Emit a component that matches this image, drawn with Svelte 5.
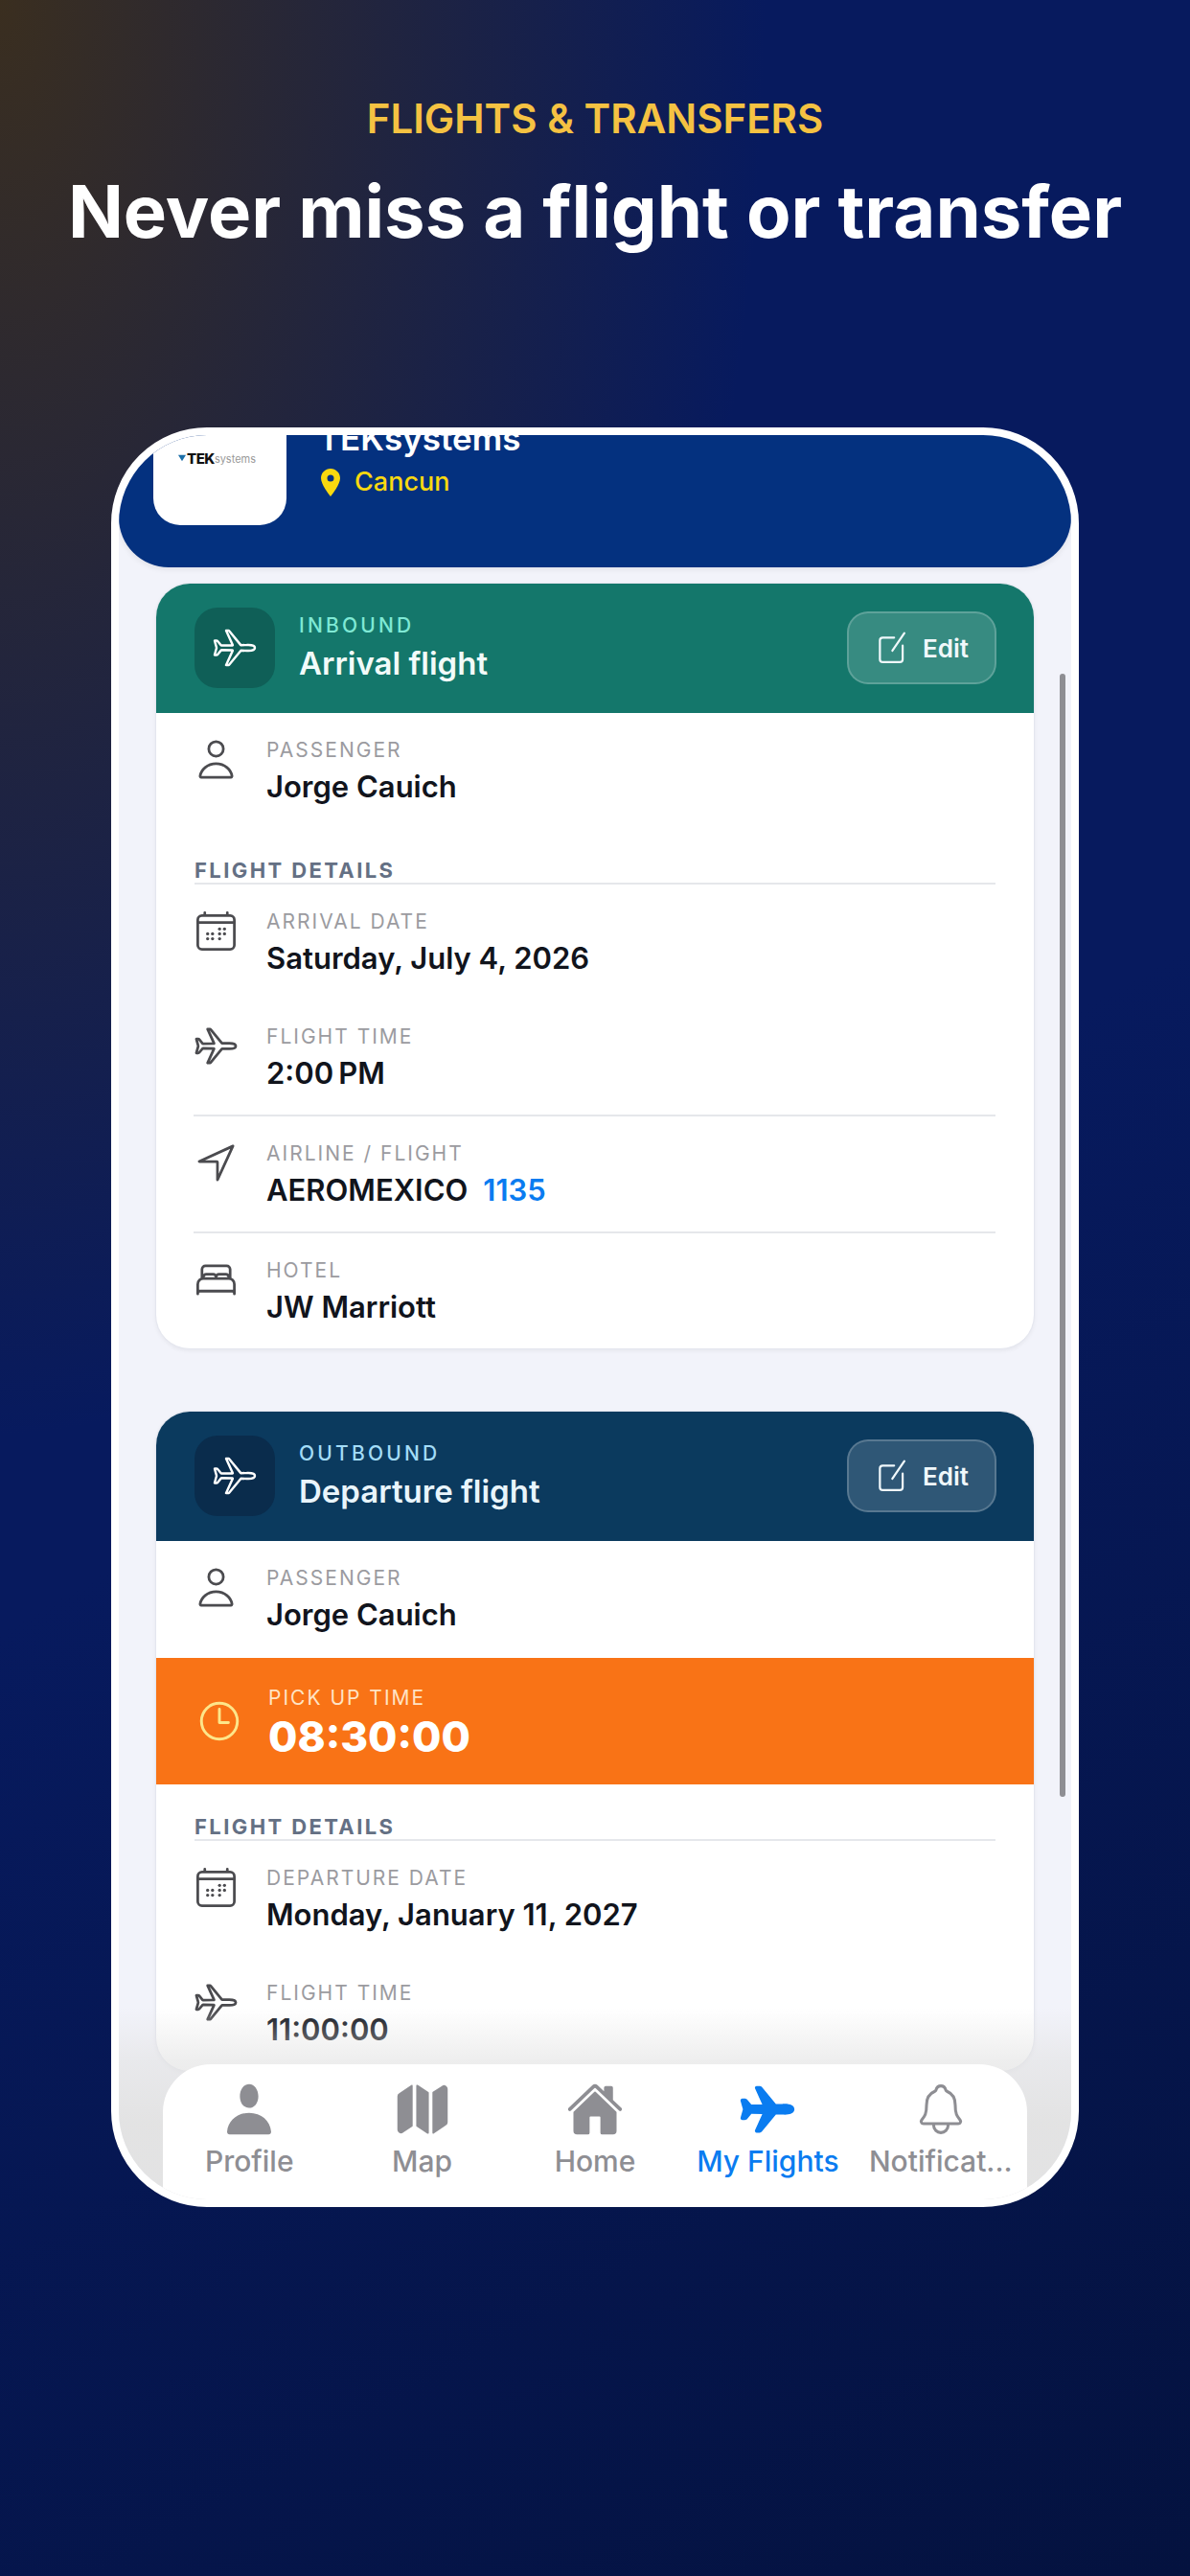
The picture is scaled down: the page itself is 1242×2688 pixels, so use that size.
<script>
    const paths = {
        plane: 'M407.72 224c-3.4 0-14.79.1-18 .3l-64.9 1.7a1.83 1.83 0 01-1.69-.9L193.55 67.56a9 9 0 00-6.66-3.56H160l73 161a2.35 2.35 0 01-2.26 3.35l-121.69 1.8a8.06 8.06 0 01-6.6-3.1l-37-45c-3-3.9-8.62-6-13.51-6H33.08c-1.29 0-1.1 1.21-.75 2.43l19.84 71.42a16.3 16.3 0 010 11.9L32.31 333c-.59 1.95-.52 3 1.77 3H52c8.14 0 9.25-1.06 13.41-6.3l37.7-45.7a8.19 8.19 0 016.6-3.1l120.68 2.7a2.7 2.7 0 012.43 3.74L160 448h26.64a9 9 0 006.65-3.55L323.14 287c.39-.6 2-.9 2.7-.9l63.9 1.7c3.3.2 14.59.3 18 .3C452 288.1 480 275.6 480 256s-27.91-32-72.28-32z',
        calendar: 'M96 80h320a48 48 0 0148 48v288a48 48 0 01-48 48H96a48 48 0 01-48-48V128a48 48 0 0148-48zM128 48v32M384 48v32M464 160H48',
        navigate: 'M448 64L64 240.14h200a8 8 0 018 8V448z',
        bed: 'M384 240H96V136a40.12 40.12 0 0140-40h240a40.12 40.12 0 0140 40v104zM48 416V304a64.19 64.19 0 0164-64h288a64.19 64.19 0 0164 64v112M48 416v-8a24.07 24.07 0 0124-24h368a24.07 24.07 0 0124 24v8M112 240v-16a32.09 32.09 0 0132-32h80a32.09 32.09 0 0132 32v16M256 240v-16a32.09 32.09 0 0132-32h80a32.09 32.09 0 0132 32v16',
        edit: 'M272 112H112a40 40 0 00-40 40v264a40 40 0 0040 40h240a40 40 0 0040-40V224M248 296L416 48',
        clock: 'M256 64C150 64 64 150 64 256s86 192 192 192 192-86 192-192S362 64 256 64zM256 128v144h96',
        bell: 'M427.68 351.43C402 320 383.87 304 383.87 217.35 383.87 138 343.35 109.73 310 96c-4.43-1.82-8.6-6-9.95-10.55C294.2 65.54 277.8 48 256 48s-38.21 17.55-44 37.47c-1.35 4.6-5.52 8.71-9.95 10.53-33.39 13.75-73.87 41.92-73.87 121.35C128.13 304 110 320 84.32 351.43 73.68 364.45 83 384 101.61 384h308.88c18.51 0 27.77-19.61 17.19-32.57zM320 384v16a64 64 0 01-128 0v-16'
    };
    const calendarDots = [[296, 232], [352, 232], [160, 288], [216, 288], [296, 288], [352, 288], [160, 344], [216, 344], [296, 344]];

    const solid = {
        profile: ['M256 32c-48 0-82 50-82 108s34 104 82 104 82-46 82-104-34-108-82-108zM256 288c-110 0-188 72-196 166-1 14 8 26 22 26h348c14 0 23-12 22-26-8-94-86-166-196-166z'],
        map: ['M48.17 113.34A32 32 0 0032 141.24V438a32 32 0 0047 28.37c.43-.23.85-.47 1.26-.74l84.14-55.05a8 8 0 003.63-6.72V46.45a8 8 0 00-12.51-6.63zM212.36 39.31A8 8 0 00200 46v357.56a8 8 0 003.63 6.72l96 62.42A8 8 0 00312 466V108.67a8 8 0 00-3.64-6.73zM464.53 46.47a31.64 31.64 0 00-31.5-.88 12.07 12.07 0 00-1.25.74l-84.15 55a8 8 0 00-3.63 6.72v357.46a8 8 0 0012.52 6.63l107.07-73.46a32 32 0 0016.41-28v-296a32.76 32.76 0 00-15.47-28.21z'],
        home: ['M261.56 101.28a8 8 0 00-11.06 0L66.4 277.15a8 8 0 00-2.47 5.79L63.9 448a32 32 0 0032 32H192a16 16 0 0016-16V328a8 8 0 018-8h80a8 8 0 018 8v136a16 16 0 0016 16h96.06a32 32 0 0032-32V282.94a8 8 0 00-2.47-5.79z', 'M490.91 244.15l-74.8-71.56V64a16 16 0 00-16-16h-48a16 16 0 00-16 16v32l-57.92-55.38C272.77 35.14 264.71 32 256 32c-8.68 0-16.72 3.14-22.14 8.63l-212.7 203.5c-6.22 6-7 15.87-1.34 22.37A16 16 0 0043 267.56L250.5 69.28a8 8 0 0111.06 0l207.52 198.28a16 16 0 0022.59-.44c6.14-6.36 5.63-16.86-.76-22.97z'],
        flights: ['M186.62 464H160a16 16 0 01-14.57-22.6l64.46-142.25L113.1 297l-35.3 42.77C71.07 348.23 65.7 352 52 352H34.08a17.66 17.66 0 01-14.7-7.06c-2.38-3.21-4.72-8.65-2.44-16.41l19.82-71c.15-.53.33-1.06.53-1.58a.38.38 0 000-.15 14.82 14.82 0 01-.53-1.59l-19.84-71.45c-2.15-7.61.2-12.93 2.56-16.06a16.83 16.83 0 0113.6-6.7H52c10.23 0 20.16 4.59 26 12l34.57 42.05 97.32-1.44-64.44-142A16 16 0 01160 48h26.91a25 25 0 0119.35 9.8l125.05 152 57.77-1.52c4.23-.23 15.95-.31 18.66-.31C463 208 496 225.94 496 256c0 9.46-3.78 27-29.07 38.16-14.93 6.6-34.85 9.94-59.21 9.94-2.68 0-14.37-.08-18.66-.31l-57.76-1.54-125.36 152a25 25 0 01-19.32 9.75z']
    };

    const tabs = [
        { label: 'Profile', icon: 'profile' },
        { label: 'Map', icon: 'map' },
        { label: 'Home', icon: 'home' },
        { label: 'My Flights', icon: 'flights', active: true },
        { label: 'Notificat...', icon: 'bell' }
    ];
</script>

{#snippet icon(name, cls = 'ico')}
    <svg class={cls} viewBox="0 0 512 512" fill="none" stroke="currentColor" stroke-linecap="round" stroke-linejoin="round">
        {#if name === 'person'}
            <circle cx="256" cy="136" r="83" />
            <path d="M256 303c-100 0-170 70-181 140-1 8 4 15 12 15h338c8 0 13-7 12-15-11-70-81-140-181-140z" />
        {:else}
            <path d={paths[name]} />
        {/if}
        {#if name === 'calendar'}
            {#each calendarDots as [x, y]}
                <circle cx={x} cy={y} r="18" fill="currentColor" stroke="none" />
            {/each}
        {/if}
    </svg>
{/snippet}

{#snippet field(name, label, value, num = '', line = false)}
    <div class="field" class:line>
        {@render icon(name)}
        <div>
            <div class="label">{label}</div>
            <div class="value">{value}{#if num}<span class="num">{num}</span>{/if}</div>
        </div>
    </div>
{/snippet}

{#snippet cardHead(kind, tag, title)}
    <div class="head {kind}">
        <div class="tile">{@render icon('plane', 'tile-ico')}</div>
        <div class="head-text">
            <div class="tag">{tag}</div>
            <div class="title">{title}</div>
        </div>
        <div class="edit">{@render icon('edit', 'edit-ico')}<span>Edit</span></div>
    </div>
{/snippet}

<div class="page">
    <div class="eyebrow">FLIGHTS &amp; TRANSFERS</div>
    <h1>Never miss a flight or transfer</h1>

    <div class="phone">
        <header class="top">
            <div class="logo">
                <svg class="logo-mark" viewBox="0 0 10 10"><path d="M0 1h10L5 9z" /></svg>
                <span class="tek">TEK</span><span class="sys">systems</span>
            </div>
            <div class="company">
                <div class="name">TEKsystems</div>
                <div class="city">
                    <svg class="pin" viewBox="0 0 20 29"><path fill-rule="evenodd" d="M10 0C4.500 0 0 4.400 0 10c0 7 10 19 10 19s10-12 10-19C20 4.400 15.500 0 10 0zm0 6.500a3.500 3.500 0 110 7 3.500 3.500 0 010-7z" /></svg>
                    Cancun
                </div>
            </div>
        </header>

        <div class="content">
            <section class="card">
                {@render cardHead('inbound', 'INBOUND', 'Arrival flight')}
                {@render field('person', 'PASSENGER', 'Jorge Cauich')}
                <div class="section">FLIGHT DETAILS</div>
                {@render field('calendar', 'ARRIVAL DATE', 'Saturday, July 4, 2026')}
                {@render field('plane', 'FLIGHT TIME', '2:00\u202fPM', '', true)}
                {@render field('navigate', 'AIRLINE / FLIGHT', 'AEROMEXICO', '1135', true)}
                {@render field('bed', 'HOTEL', 'JW Marriott')}
            </section>

            <section class="card">
                {@render cardHead('outbound', 'OUTBOUND', 'Departure flight')}
                {@render field('person', 'PASSENGER', 'Jorge Cauich')}
                <div class="pickup">
                    {@render icon('clock', 'clock')}
                    <div>
                        <div class="pick-label">PICK UP TIME</div>
                        <div class="pick-value">08:30:00</div>
                    </div>
                </div>
                <div class="section">FLIGHT DETAILS</div>
                {@render field('calendar', 'DEPARTURE DATE', 'Monday, January 11, 2027')}
                {@render field('plane', 'FLIGHT TIME', '11:00:00')}
            </section>
        </div>

        <div class="scrollbar"></div>
        <div class="fade"></div>

        <nav class="tabs">
            {#each tabs as tab}
                <div class="tab" class:active={tab.active}>
                    {#if tab.icon === 'bell'}
                        <svg class="tab-ico" viewBox="0 0 512 512" fill="none" stroke="currentColor" stroke-width="26" stroke-linecap="round" stroke-linejoin="round"><path d={paths.bell} /></svg>
                    {:else}
                        <svg class="tab-ico" viewBox="0 0 512 512" fill="currentColor">
                            {#each solid[tab.icon] as d}<path {d} />{/each}
                        </svg>
                    {/if}
                    <span>{tab.label}</span>
                </div>
            {/each}
        </nav>
    </div>
</div>

<style>
    :global(body) { margin: 0; font-family: Inter, "Liberation Sans", sans-serif; }

    .page {
        width: 1242px; height: 2688px; overflow: hidden; box-sizing: border-box; padding-top: 100px;
        background:
            radial-gradient(ellipse 800px 1500px at 0 0, rgba(80, 55, 5, 0.7), rgba(80, 55, 5, 0) 100%),
            linear-gradient(150deg, #071a5e 0%, #071a5e 50%, #04123f 100%);
    }

    .eyebrow { text-align: center; color: #f5c242; font-size: 42px; font-weight: 600; line-height: 48px; }
    h1 { margin: 26px 0 0; text-align: center; color: #fff; font-size: 76px; font-weight: 700; line-height: 92px; white-space: nowrap; }

    .phone {
        position: relative; box-sizing: border-box; width: 1010px; height: 1857px; margin: 180px 0 0 116px;
        border: 8px solid #fff; border-radius: 100px; overflow: hidden; background: #f2f3fa;
    }

    .top {
        height: 138px; box-sizing: border-box; display: flex; align-items: flex-end; gap: 33px; padding: 0 0 44px 36px;
        background: #04317f; border-radius: 0 0 52px 52px; overflow: hidden; box-shadow: 0 2px 6px rgba(0, 0, 0, 0.08);
    }
    .logo {
        flex: none; width: 139px; height: 130px; box-sizing: border-box; display: flex; align-items: flex-end; padding: 0 0 60px 26px;
        background: #fff; border-radius: 0 0 28px 28px; color: #111; white-space: nowrap;
    }
    .logo-mark { width: 8px; height: 8px; margin: 0 1px 6px 0; fill: #1c6fa8; }
    .tek { font-size: 15px; font-weight: 800; letter-spacing: -0.5px; line-height: 18px; }
    .sys { font-size: 11px; color: #999; line-height: 17px; }
    .company { margin-bottom: 28px; }
    .name { color: #fff; font-size: 35px; font-weight: 600; line-height: 40px; }
    .city { display: flex; align-items: center; gap: 15px; margin: 9px 0 0 3px; color: #f9d90f; font-size: 27px; font-weight: 500; line-height: 34px; }
    .pin { width: 20px; height: 29px; fill: #f9d90f; }

    .content { display: flex; flex-direction: column; gap: 64px; padding: 16px 38px 0; }
    .card { flex: none; box-sizing: border-box; background: #fff; border: 1px solid #e4e6ef; border-radius: 36px; overflow: hidden; box-shadow: 0 2px 4px rgba(0, 0, 0, 0.05); }

    .head { height: 136px; box-sizing: border-box; margin: -1px -1px 0; display: flex; align-items: center; padding: 0 40px 0 41px; }
    .inbound { background: #14776b; --tile: #0f5f57; --tag: #7fe9d5; --title: #f2fbf9; }
    .outbound { background: #0b3a5e; --tile: #0a2c4c; --tag: #a3dcf7; --title: #e9f5fc; }
    .tile { width: 84px; height: 84px; border-radius: 24px; background: var(--tile); display: flex; align-items: center; justify-content: center; }
    .tile-ico { width: 48px; height: 48px; color: #fff; stroke-width: 26; }
    .head-text { flex: 1; margin-left: 25px; }
    .tag { color: var(--tag); font-size: 21px; font-weight: 500; letter-spacing: 3.2px; line-height: 28px; }
    .title { color: var(--title); font-size: 33px; font-weight: 600; line-height: 42px; margin-top: 4px; }
    .edit {
        width: 156px; height: 76px; box-sizing: border-box; display: flex; align-items: center; justify-content: center; gap: 12px;
        background: rgba(255, 255, 255, 0.15); border: 2px solid rgba(255, 255, 255, 0.2); border-radius: 22px;
        color: #f0f8fb; font-size: 26px; font-weight: 600;
    }
    .edit-ico { width: 38px; height: 38px; stroke-width: 30; }

    .field { display: flex; gap: 29px; margin: 0 40px 0 39px; padding: 25px 0 24px; }
    .field.line { border-bottom: 2px solid #e5e7eb; }
    .ico { flex: none; width: 47px; height: 47px; color: #4b4b4f; stroke-width: 30; }
    .label { color: #9b9ba0; font-size: 21px; letter-spacing: 2px; line-height: 28px; }
    .value { margin-top: 5px; color: #11141c; font-size: 31px; font-weight: 600; line-height: 38px; }
    .num { margin-left: 16px; color: #0a7cf0; }

    .section { margin: 32px 40px 0; padding-bottom: 1px; border-bottom: 2px solid #e5e7eb; color: #647084; font-size: 22px; font-weight: 700; letter-spacing: 2.4px; line-height: 24px; }

    .pickup { display: flex; align-items: center; gap: 26px; height: 132px; box-sizing: border-box; margin-top: 2px; padding-left: 41px; background: #f97316; }
    .clock { flex: none; width: 50px; height: 50px; color: #fde68a; stroke-width: 30; }
    .pick-label { color: #ffe3c4; font-size: 21px; letter-spacing: 2px; line-height: 28px; }
    .pick-value { margin-top: 3px; color: #fff; font-size: 44px; font-weight: 800; line-height: 46px; }

    .scrollbar { position: absolute; left: 982px; top: 249px; width: 6px; height: 1172px; border-radius: 3px; background: #8e8e93; }
    .fade { position: absolute; left: 0; right: 0; bottom: 0; height: 200px; background: linear-gradient(rgba(226, 226, 226, 0), rgba(226, 226, 226, 0.6) 28%, rgba(226, 226, 226, 0.95) 60%); }

    .tabs { position: absolute; left: 46px; right: 46px; bottom: 0; height: 141px; display: grid; grid-template-columns: repeat(5, 1fr); background: #fff; border-radius: 50px 50px 0 0; }
    .tab { display: flex; flex-direction: column; align-items: center; padding-top: 17px; color: #8e8e93; font-size: 30px; font-weight: 500; line-height: 36px; white-space: nowrap; }
    .tab.active { color: #0a7cf0; }
    .tab-ico { width: 60px; height: 60px; margin-bottom: 6px; }
</style>
